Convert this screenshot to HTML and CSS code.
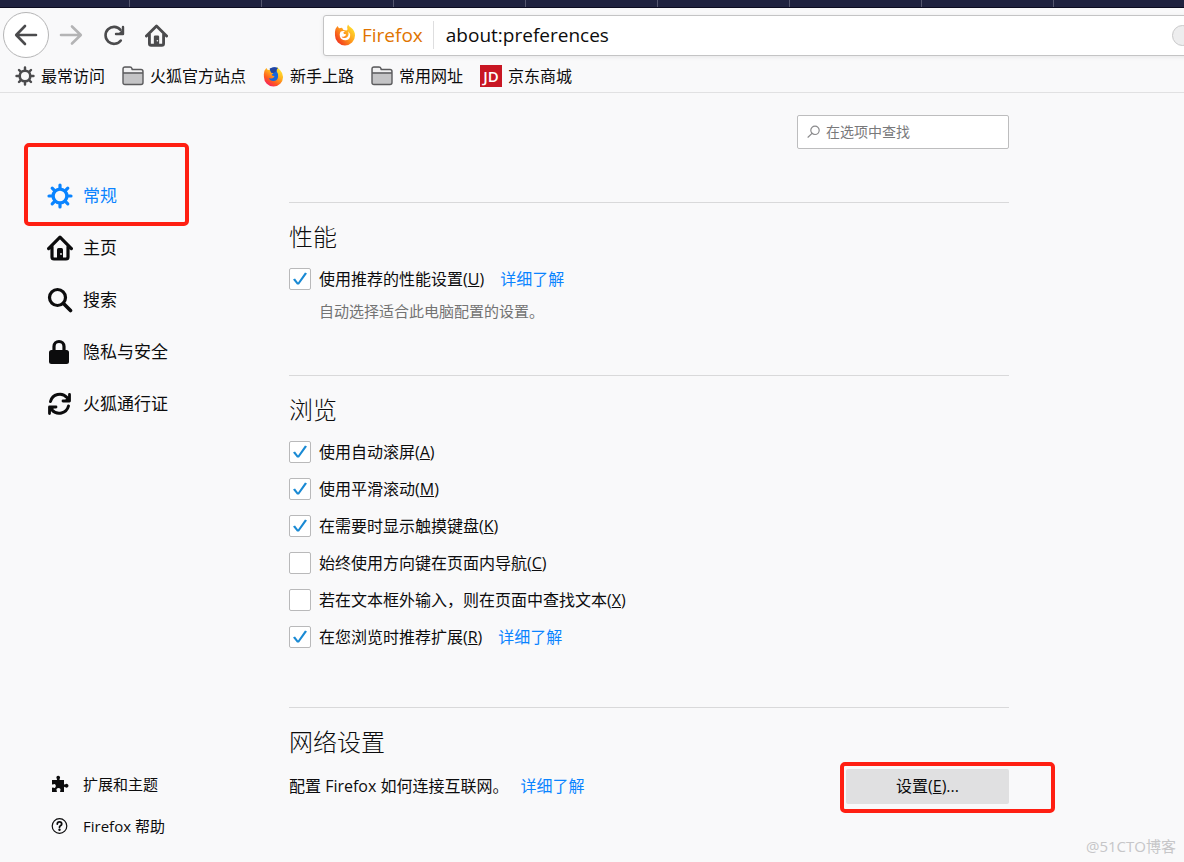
FILE: index.html
```html
<!DOCTYPE html>
<html lang="zh-CN">
<head>
<meta charset="utf-8">
<title>选项</title>
<link rel="stylesheet" href="styles.css">
</head>
<body>
<svg class="defs" aria-hidden="true">
  <defs>
    <linearGradient id="flame" x1="0.85" y1="0" x2="0.2" y2="1">
      <stop offset="0" stop-color="#fff43a"/>
      <stop offset="0.4" stop-color="#ffb01e"/>
      <stop offset="0.7" stop-color="#ff5a1f"/>
      <stop offset="1" stop-color="#f5156c"/>
    </linearGradient>
    <linearGradient id="flame-warm" x1="0.9" y1="0.1" x2="0.1" y2="0.8">
      <stop offset="0" stop-color="#ffe52e"/>
      <stop offset="0.5" stop-color="#ff9a1c"/>
      <stop offset="1" stop-color="#f2391f"/>
    </linearGradient>
    <symbol id="gear" viewBox="0 0 26 26">
      <circle cx="13" cy="13" r="6.9" fill="none" stroke="currentColor" stroke-width="3.4"/>
      <g stroke="currentColor" stroke-width="3.2" stroke-linecap="round">
        <path d="M13 5V2M13 21v3M5 13H2M21 13h3M7.4 7.4L5.2 5.2M18.6 18.6l2.2 2.2M7.4 18.6l-2.2 2.2M18.6 7.4l2.2-2.2"/>
      </g>
    </symbol>
    <symbol id="house" viewBox="0 0 26 26">
      <path d="M1.6 13.6L13 2.2l11.4 11.4M5 11.5V22q0 2 2 2h12q2 0 2-2V11.5" fill="none" stroke="currentColor" stroke-width="3.2" stroke-linecap="round" stroke-linejoin="round"/>
      <path d="M10 14.5q0-1.5 1.5-1.5h3q1.500 0 1.500 1.500V24h-6z" fill="currentColor"/>
      <circle cx="14" cy="19" r="0.9" fill="#f9f9fa"/>
    </symbol>
    <symbol id="folder" viewBox="0 0 22 20">
      <path d="M1 16.500V3q0-2 2-2h5q1.500 0 2 1.500l.3 1H19q2 0 2 2v11q0 2-2 2H3q-2 0-2-2z" fill="#c4c4c6"/>
      <path d="M2 2h7v2h11v2.500H2z" fill="#f1f1f2"/>
      <path d="M1 16.500V3q0-2 2-2h5q1.500 0 2 1.500l.3 1H19q2 0 2 2v11q0 2-2 2H3q-2 0-2-2zM1.500 7H20.500" fill="none" stroke="#5b5b5d" stroke-width="1.400"/>
    </symbol>
  </defs>
</svg>

<header class="chrome">
  <div class="tabstrip"></div>
  <div class="navbar">
    <button class="tool back" aria-label="后退"><svg width="24" height="22" viewBox="0 0 24 22"><path d="M22 11H2.500M11 2L2.200 11l8.800 9" fill="none" stroke="currentColor" stroke-width="2.600" stroke-linecap="round" stroke-linejoin="round"/></svg></button>
    <button class="tool forward" aria-label="前进"><svg width="24" height="22" viewBox="0 0 24 22"><path d="M2 11h19.500M13 2.500L21.800 11 13 19.500" fill="none" stroke="currentColor" stroke-width="2.600" stroke-linecap="round" stroke-linejoin="round"/></svg></button>
    <button class="tool" aria-label="刷新"><svg width="24" height="24" viewBox="0 0 24 24"><path d="M18.800 17.500A8.500 8.500 0 1 1 18.500 6.800" fill="none" stroke="currentColor" stroke-width="2.600" stroke-linecap="round"/><path d="M21 4v7h-7" fill="none" stroke="currentColor" stroke-width="2.400" stroke-linecap="round" stroke-linejoin="round"/><path d="M21 6v5h-5z" fill="currentColor"/></svg></button>
    <button class="tool" aria-label="主页"><svg width="23" height="23"><use href="#house"/></svg></button>
    <div class="urlbar">
      <svg width="22" height="22" viewBox="0 0 22 22"><path d="M1.500 5L3.500 2 5 4.300l3-.5L9.500 6l3 .500 1-1Q12.500 3 14 .5q.8 1.500 3.500 3.500 3.500 3 3.500 7.500A10 10 0 0 1 1 11.500Q.6 8 1.500 5z" fill="url(#flame-warm)"/><path d="M6.500 7.800q1.800-1.300 4.500-.6l-1.800 1.600q.8 1.800 3 1.500-.3 2-2.400 2.400-1.300.2-2.300-.5.700 2 3.200 1.900 3.200-.3 3.800-3.300.3-2-.6-3.600 2.600 2 2.200 5-.7 3.800-4.800 4.100-4.300 0-5.400-3.800-.6-2.800.6-4.700z" fill="#fff"/></svg>
      <span class="identity">Firefox</span>
      <input class="address" type="text" aria-label="地址" value="about:preferences">
      <button class="pill" aria-label="页面操作"></button>
    </div>
  </div>
  <nav class="bookmarks" aria-label="书签">
    <a href="#"><svg class="grey" width="20" height="20"><use href="#gear"/></svg>最常访问</a>
    <a href="#"><svg width="22" height="20"><use href="#folder"/></svg>火狐官方站点</a>
    <a href="#"><svg width="21" height="21" viewBox="0 0 22 22"><path d="M1.500 5L3.500 2 5 4.300l3-.5L9.500 6l3 .500 1-1Q12.500 3 15 1q.8 1.500 3 3.500 3 3 3 7A10 10 0 0 1 1 11.500Q.6 8 1.500 5z" fill="url(#flame)"/><path d="M7 3Q11 0 15.500 2.200 13.500 4 14.500 6q2 2.500 1.300 5.500-.8 4-4.800 4.200-3.800 0-5-3.200 2 1 4 .3 2-.8 2-2.300-2 .2-3-1.300L11 7.500 8.500 6.700z" fill="#1766dc"/><path d="M7 3Q11 0 15.500 2.200 13.500 4 14 5.500L11 7.300 8.500 6.700z" fill="#24459f"/></svg>新手上路</a>
    <a href="#"><svg width="22" height="20"><use href="#folder"/></svg>常用网址</a>
    <a href="#"><span class="jd" aria-hidden="true">JD</span>京东商城</a>
  </nav>
</header>

<div class="page">
  <aside class="sidebar">
    <nav class="categories" aria-label="类别">
      <a class="active" href="#"><svg width="26" height="26"><use href="#gear"/></svg>常规</a>
      <a href="#"><svg width="26" height="26"><use href="#house"/></svg>主页</a>
      <a href="#"><svg width="26" height="26" viewBox="0 0 26 26"><circle cx="10.500" cy="10.500" r="8" fill="none" stroke="currentColor" stroke-width="3.200"/><path d="M16.500 16.500l7 7" stroke="currentColor" stroke-width="3.600" stroke-linecap="round"/></svg>搜索</a>
      <a href="#"><svg width="26" height="26" viewBox="0 0 26 26"><path d="M7 12V7.500a5 5 0 0 1 10 0V12" fill="none" stroke="currentColor" stroke-width="3.200"/><rect x="2" y="11" width="20" height="14" rx="2.500" fill="currentColor"/></svg>隐私与安全</a>
      <a href="#"><svg width="26" height="26" viewBox="0 0 26 26"><path d="M3.500 10.500A9.600 9.600 0 0 1 20 6.500M21.500 15A9.600 9.600 0 0 1 5 19" fill="none" stroke="currentColor" stroke-width="3" stroke-linecap="round"/><path d="M22.500 3.500V10H16M2.500 22.500V16H9" fill="none" stroke="currentColor" stroke-width="2.800" stroke-linecap="round" stroke-linejoin="round"/><path d="M22.500 4.500V10H17zM2.500 21.500V16H8z" fill="currentColor"/></svg>火狐通行证</a>
    </nav>
    <nav class="extras" aria-label="更多">
      <a href="#"><svg width="18" height="18" viewBox="0 0 18 18"><path d="M1 5h4.500q.8 0 .5-1Q5 3 5.500 1.800 6 .8 7.200.8T9 2q.4 1-.5 2-.3 1 .5 1h4v4q.2.800 1 .4 1.200-1 2.300-.5 1.200.6 1.200 1.800t-1.200 1.800q-1.100.5-2.300-.5-.8-.4-1 .4V17H9.500q-.8-.3-.4-1 .8-1.200.3-2.100-.6-.9-1.900-.9t-1.900.9q-.5.900.3 2.100.4.700-.4 1H1v-4q.2-.8 1-.5 1 .8 2 .3.800-.5.800-1.800T4 9.200q-1-.5-2 .3-.8.300-1-.5z" fill="currentColor"/></svg>扩展和主题</a>
      <a href="#"><svg width="18" height="18" viewBox="0 0 18 18"><circle cx="8.500" cy="9" r="7.300" fill="none" stroke="currentColor" stroke-width="1.200"/><path d="M6.300 7q0-2.200 2.200-2.200T10.700 7q0 1-1.200 1.700-1 .6-1 1.600" fill="none" stroke="currentColor" stroke-width="1.800" stroke-linecap="round"/><circle cx="8.500" cy="12.800" r="1.200" fill="currentColor"/></svg>Firefox 帮助</a>
    </nav>
    <div class="mark mark-category"></div>
  </aside>

  <main class="content">
    <label class="search">
      <svg width="14" height="14" viewBox="0 0 14 14"><circle cx="8" cy="5.300" r="4.200" fill="none" stroke="#8a8a8c" stroke-width="1.200"/><path d="M5 8.400L1 12.200" stroke="#8a8a8c" stroke-width="1.200" stroke-linecap="round"/></svg>
      <input type="search" aria-label="在选项中查找" placeholder="在选项中查找">
    </label>

    <section>
      <h2>性能</h2>
      <div class="row"><label><input type="checkbox" checked><span>使用推荐的性能设置(<u>U</u>)</span></label><a href="#">详细了解</a></div>
      <p class="note">自动选择适合此电脑配置的设置。</p>
    </section>

    <section>
      <h2>浏览</h2>
      <div class="row"><label><input type="checkbox" checked><span>使用自动滚屏(<u>A</u>)</span></label></div>
      <div class="row"><label><input type="checkbox" checked><span>使用平滑滚动(<u>M</u>)</span></label></div>
      <div class="row"><label><input type="checkbox" checked><span>在需要时显示触摸键盘(<u>K</u>)</span></label></div>
      <div class="row"><label><input type="checkbox"><span>始终使用方向键在页面内导航(<u>C</u>)</span></label></div>
      <div class="row"><label><input type="checkbox"><span>若在文本框外输入，则在页面中查找文本(<u>X</u>)</span></label></div>
      <div class="row"><label><input type="checkbox" checked><span>在您浏览时推荐扩展(<u>R</u>)</span></label><a href="#">详细了解</a></div>
    </section>

    <section>
      <h2>网络设置</h2>
      <div class="row network">
        <span>配置 Firefox 如何连接互联网。</span><a href="#">详细了解</a>
        <div class="action"><button class="settings">设置(<u>E</u>)...</button><div class="mark mark-settings"></div></div>
      </div>
    </section>
  </main>
  <div class="watermark">@51CTO博客</div>
</div>
</body>
</html>
```

FILE: styles.css
```css
* {
  box-sizing: border-box;
}

body {
  margin: 0;
  min-height: 100vh;
  display: flex;
  flex-direction: column;
  background: #f9f9fa;
  color: #0c0c0d;
  font: 16px/24px "Open Sans", "Noto Sans CJK SC", sans-serif;
}

button,
input {
  font: inherit;
  color: inherit;
}

a {
  color: #0a84ff;
  text-decoration: none;
}

svg {
  flex: none;
}

.defs {
  position: absolute;
  width: 0;
  height: 0;
}

/* Browser chrome */
.chrome {
  overflow: hidden;
  border-bottom: 1px solid #e1e1e2;
}

.tabstrip {
  height: 8px;
  border-bottom: 1px solid #0c0c20;
  background: repeating-linear-gradient(to right, #202340 0 129px, #55576f 129px 130px, #202340 130px 132px);
}

.navbar {
  display: flex;
  align-items: center;
  height: 54px;
  padding-left: 3px;
}

.tool {
  display: flex;
  align-items: center;
  justify-content: center;
  width: 43px;
  height: 46px;
  padding: 0;
  border: 0;
  background: none;
  color: #4b4b4d;
}

.back {
  width: 46px;
  border: 1px solid #b5b5b6;
  border-radius: 50%;
  background: #fff;
}

.forward {
  color: #b4b4b5;
}

.urlbar {
  display: flex;
  flex: 1;
  align-items: center;
  height: 41px;
  margin-left: 145px;
  margin-right: -20px;
  padding: 0 10px;
  border: 1px solid #c4c4c5;
  border-radius: 3px;
  background: #fff;
  box-shadow: 0 1px 4px rgba(0, 0, 0, 0.08);
}

.identity {
  margin-left: 6px;
  padding-right: 10px;
  border-right: 1px solid #dededf;
  color: #e07400;
  font-size: 19px;
  line-height: 28px;
}

.address {
  flex: 1;
  min-width: 0;
  padding: 0 0 0 12px;
  border: 0;
  outline: 0;
  background: none;
  font-size: 19px;
}

.pill {
  width: 21px;
  height: 21px;
  padding: 0;
  border: 1px solid #c8c8c9;
  border-radius: 50%;
  background: #ededee;
}

.bookmarks {
  display: flex;
  align-items: center;
  gap: 17px;
  height: 30px;
  padding: 0 15px 2px;
}

.bookmarks a {
  display: flex;
  align-items: center;
  gap: 6px;
  color: #0c0c0d;
}

.grey {
  color: #4b4b4d;
}

.jd {
  width: 22px;
  height: 22px;
  background: #c81623;
  color: #fff;
  font: 600 15px/22px "Open Sans", sans-serif;
  text-align: center;
}

/* Preferences page */
.page {
  position: relative;
  display: flex;
  flex: 1;
}

.sidebar {
  position: relative;
  display: flex;
  flex: none;
  flex-direction: column;
  width: 289px;
  padding: 77px 0 15px 47px;
}

.categories a,
.extras a {
  display: flex;
  align-items: center;
  gap: 10px;
  height: 52px;
  color: #0c0c0d;
  font-size: 17px;
}

.categories .active {
  color: #0a84ff;
}

.extras {
  margin-top: auto;
  padding-left: 4px;
}

.extras a {
  gap: 14px;
  height: 42px;
  font-size: 15px;
}

.content {
  flex: 1;
  max-width: 720px;
  padding-top: 22px;
}

.search {
  display: flex;
  align-items: center;
  gap: 5px;
  width: 212px;
  height: 34px;
  margin: 0 0 53px auto;
  padding: 0 9px;
  border: 1px solid #bdbdbe;
  border-radius: 2px;
  background: #fff;
}

.search input {
  flex: 1;
  min-width: 0;
  padding: 0;
  border: 0;
  outline: 0;
  background: none;
  font-size: 14px;
}

.search input::placeholder {
  color: #79797b;
}

section {
  padding: 18px 0 52px;
  border-top: 1px solid #d9d9da;
}

section:last-child {
  padding-bottom: 0;
}

h2 {
  margin: 0 0 7px;
  font-size: 24px;
  font-weight: 300;
  line-height: 32px;
}

.row {
  display: flex;
  align-items: center;
  gap: 12px;
  height: 37px;
}

.row label {
  display: flex;
  align-items: center;
  gap: 8px;
}

.row label + a {
  margin-left: 4px;
}

input[type="checkbox"] {
  appearance: none;
  width: 22px;
  height: 22px;
  margin: 0;
  border: 1px solid #b9b9ba;
  border-radius: 2px;
  background: #fff;
}

input[type="checkbox"]:checked::before {
  content: "";
  display: block;
  width: 20px;
  height: 20px;
  background: #1a8ad4;
  clip-path: polygon(3px 11px, 5px 10px, 8px 14px, 15px 4px, 17px 5px, 9px 16px, 7px 16px);
}

.note {
  margin: 2px 0 0 30px;
  color: #737373;
  font-size: 15px;
}

.row.network {
  height: 42px;
}

.action {
  position: relative;
  margin-left: auto;
}

.settings {
  display: block;
  width: 163px;
  height: 35px;
  padding: 0;
  border: 0;
  border-radius: 2px;
  background: #e0e0e1;
}

/* Red highlight frames */
.mark {
  position: absolute;
  border: 4px solid #ff1f12;
  border-radius: 5px;
  pointer-events: none;
}

.mark-category {
  top: 50px;
  left: 24px;
  width: 165px;
  height: 83px;
}

.mark-settings {
  top: -7px;
  left: -6px;
  width: 215px;
  height: 51px;
}

.watermark {
  position: absolute;
  right: 8px;
  bottom: 4px;
  color: #c6c6c8;
  font-size: 15px;
}
```
